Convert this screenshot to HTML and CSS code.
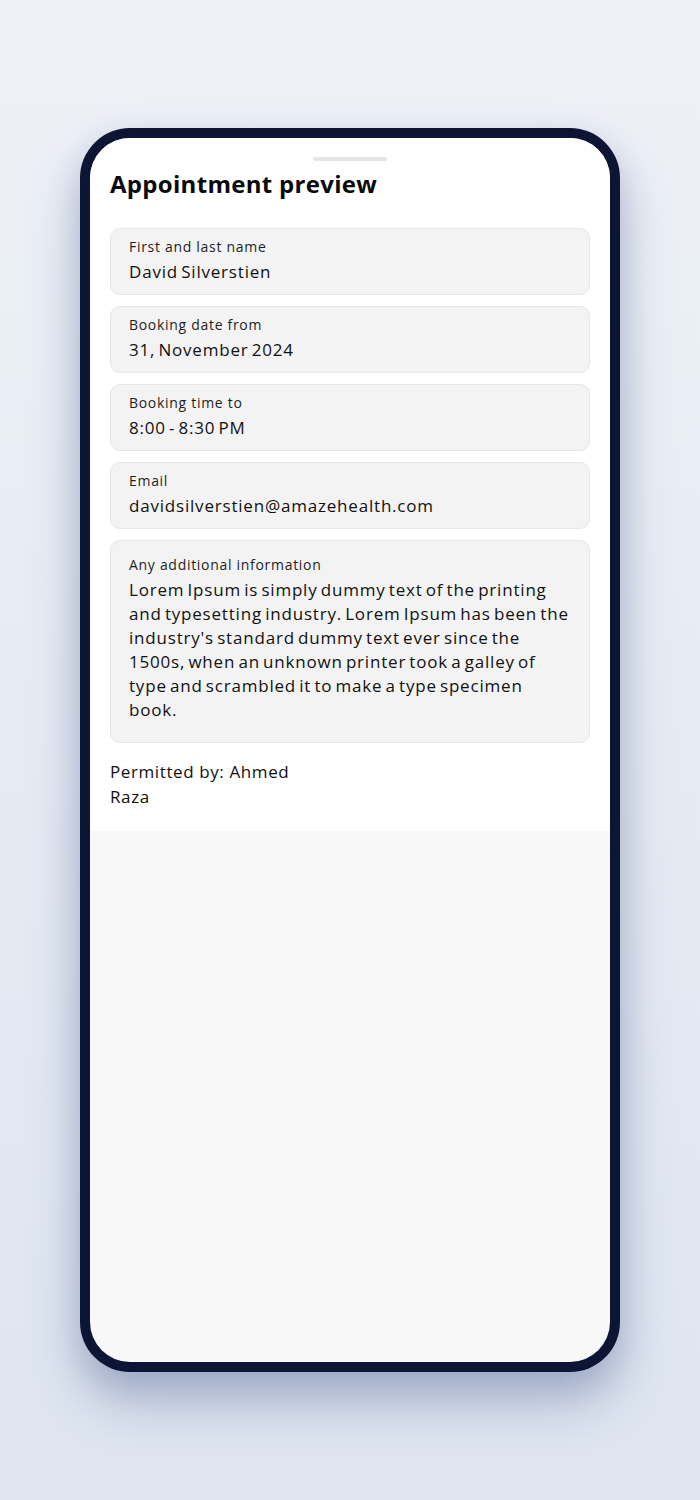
FILE: index.html
```html
<!DOCTYPE html>
<html lang="en">
<head>
<meta charset="utf-8">
<title>Appointment preview</title>
<link rel="stylesheet" href="styles.css">
</head>
<body>
<div class="stage">
  <div class="phone">
    <div class="screen">
      <section class="sheet">
        <div class="handle"></div>
        <h1 class="title">Appointment preview</h1>
        <div class="fields">
          <div class="field">
            <div class="label">First and last name</div>
            <div class="value">David Silverstien</div>
          </div>
          <div class="field">
            <div class="label">Booking date from</div>
            <div class="value">31, November 2024</div>
          </div>
          <div class="field">
            <div class="label">Booking time to</div>
            <div class="value">8:00 - 8:30 PM</div>
          </div>
          <div class="field">
            <div class="label">Email</div>
            <div class="value">davidsilverstien@amazehealth.com</div>
          </div>
          <div class="field field-long">
            <div class="label">Any additional information</div>
            <div class="value value-long">Lorem Ipsum is simply dummy text of the printing<br>and typesetting industry. Lorem Ipsum has been the<br>industry's standard dummy text ever since the<br>1500s, when an unknown printer took a galley of<br>type and scrambled it to make a type specimen<br>book.</div>
          </div>
        </div>
        <p class="permit">Permitted by: Ahmed Raza</p>
      </section>
    </div>
  </div>
</div>
</body>
</html>
```

FILE: styles.css
```css
* { box-sizing: border-box; }
html, body { margin: 0; padding: 0; }
body {
  width: 700px;
  height: 1500px;
  background: linear-gradient(180deg, #eef1f7 0%, #e6ebf3 50%, #dee5f0 100%);
  font-family: "Open Sans", "Noto Sans", sans-serif;
  color: #111;
}
.stage {
  display: flex;
  justify-content: center;
  padding-top: 128px;
}
.phone {
  width: 540px;
  height: 1244px;
  background: #0c1533;
  border-radius: 50px;
  padding: 10px;
  box-shadow: 0 30px 50px rgba(70, 90, 140, 0.35), 0 10px 30px rgba(70, 90, 140, 0.15);
}
.screen {
  height: 100%;
  background: #f8f8f8;
  border-radius: 40px;
  overflow: hidden;
}
.sheet {
  background: #fff;
  padding: 19px 20px 22px;
}
.handle {
  width: 74px;
  height: 4px;
  border-radius: 2px;
  background: #e4e4e4;
  margin: 0 auto;
}
.title {
  margin: 7px 0 0;
  font-size: 24px;
  line-height: 32px;
  font-weight: 700;
  color: #0a0a0a;
  letter-spacing: 0.3px;
}
.fields {
  margin-top: 28px;
  display: flex;
  flex-direction: column;
  gap: 11px;
}
.field {
  background: #f3f3f3;
  border: 1px solid #e6e6e6;
  border-radius: 10px;
  padding: 8px 18px 10px;
}
.label {
  font-size: 14px;
  line-height: 20px;
  color: #1e1e1e;
  letter-spacing: 0.7px;
}
.value {
  margin-top: 3px;
  font-size: 17px;
  line-height: 24px;
  color: #111;
  letter-spacing: 0.8px;
  word-spacing: -2px;
}
.field-long {
  padding: 14px 18px 20px 18px;
}
.value-long {
  white-space: nowrap;
}
.permit {
  margin: 16px 0 0;
  width: 200px;
  font-size: 17px;
  line-height: 25px;
  color: #111;
  letter-spacing: 0.6px;
}
```
